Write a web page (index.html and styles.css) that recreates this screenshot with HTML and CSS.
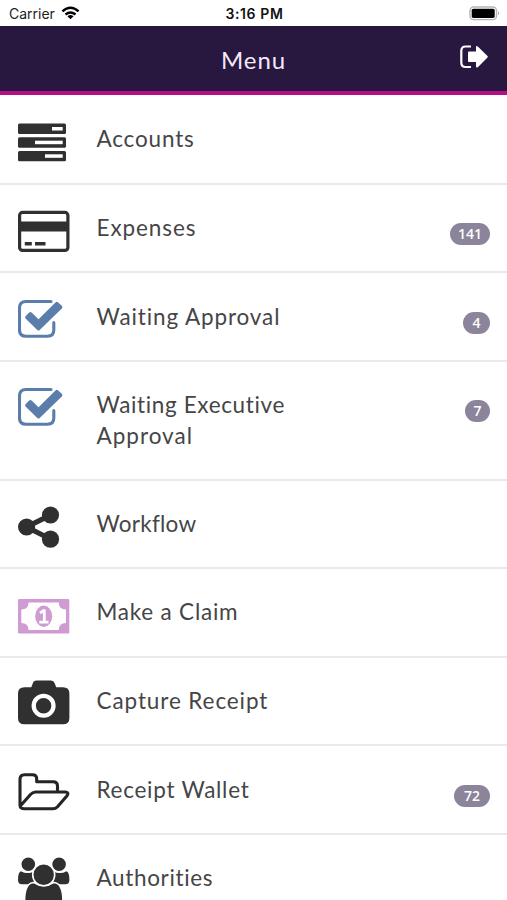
FILE: index.html
```html
<!DOCTYPE html>
<html lang="en">
<head>
<meta charset="utf-8">
<title>Menu</title>
<link rel="stylesheet" href="styles.css">
</head>
<body>
<div class="status">
  <div class="carrier"><span>Carrier</span>
    <svg class="wifi" viewBox="0 0 20 14"><g fill="none" stroke="#000" stroke-width="2.5"><path d="M1.5 5.2Q10-2.2 18.5 5.2"/><path d="M4.7 8.6Q10 4.2 15.3 8.6"/></g><path d="M6.8 10.4Q10 7.9 13.2 10.4L10 13.6z"/></svg>
  </div>
  <div class="clock">3:16 PM</div>
  <svg class="battery" viewBox="0 0 31 15"><rect x="1" y="1" width="26.5" height="12.6" rx="3.6" fill="#fff" stroke="#b5b5b5" stroke-width="1.4"/><rect x="2.7" y="2.7" width="23" height="9.2" rx="1.6"/><path d="M29 5Q31 7.3 29 9.600z" fill="#aaa"/></svg>
</div>
<header class="header">
  <h1>Menu</h1>
  <svg class="logout" viewBox="0 0 30 26"><path d="M12 2.500H6.500Q2.300 2.500 2.300 7V18.500Q2.300 23 6.500 23H12" fill="none" stroke="#fff" stroke-width="2.200"/><path d="M9 8.500Q9 7.500 10 7.500H17V3Q17.300 1.300 18.800 2.500L28.500 12Q29.200 12.700 28.500 13.500L18.800 23.200Q17.300 24.200 17 22.500V18H10Q9 18 9 17z" fill="#fff"/></svg>
</header>
<main class="menu">
  <div class="row">
    <svg class="icon" viewBox="0 0 52 60"><g fill="#303030"><rect y="7.600" width="48" height="10.400" rx="1.500"/><rect y="21.300" width="48" height="10.400" rx="1.500"/><rect y="34.900" width="48" height="10.400" rx="1.500"/></g><g fill="#fff"><rect x="34" y="11" width="10.700" height="3.500"/><rect x="17" y="24.700" width="27.700" height="3.500"/><rect x="27" y="38.300" width="17.700" height="3.500"/></g></svg>
    <span class="label accounts">Accounts</span>
  </div>
  <div class="row">
    <svg class="icon" viewBox="0 0 52 60"><rect x="1.600" y="8.400" width="48.300" height="38" rx="3" fill="#fff" stroke="#303030" stroke-width="3.200"/><path fill="#303030" d="M1 17.500H50V27.500H1zM6.800 38H13.800V41.500H6.800zM17 38H27.500V41.500H17z"/></svg>
    <span class="label expenses">Expenses</span><span class="badge b3">141</span>
  </div>
  <div class="row">
    <svg class="icon" viewBox="0 0 52 60"><path d="M33 8.500H8Q1.500 8.500 1.500 15V37Q1.500 43.200 8 43.200H29.500Q35.800 43.200 35.800 37V29.500" fill="none" stroke="#5b7dac" stroke-width="3.100" stroke-linecap="round"/><path d="M7.500 23.200L11.200 19.500Q12.500 18.500 13.800 19.700L20.500 26.200 37.500 9.400Q39 8.200 40.200 9.400L44 13.100Q45 14.400 43.800 15.600L21.700 37Q20.500 38 19.300 37L7.500 25.500Q6.600 24.300 7.500 23.200z" fill="#5b7dac"/></svg>
    <span class="label waiting">Waiting Approval</span><span class="badge b1">4</span>
  </div>
  <div class="row tall">
    <svg class="icon" viewBox="0 0 52 60"><path d="M33 8.500H8Q1.500 8.500 1.500 15V37Q1.500 43.200 8 43.200H29.500Q35.800 43.200 35.800 37V29.500" fill="none" stroke="#5b7dac" stroke-width="3.100" stroke-linecap="round"/><path d="M7.500 23.200L11.200 19.500Q12.500 18.500 13.800 19.700L20.500 26.200 37.500 9.400Q39 8.200 40.200 9.400L44 13.100Q45 14.400 43.800 15.600L21.700 37Q20.500 38 19.300 37L7.500 25.500Q6.600 24.300 7.500 23.200z" fill="#5b7dac"/></svg>
    <span class="label executive">Waiting Executive<br><span class="second">Approval</span></span><span class="badge b7">7</span>
  </div>
  <div class="row">
    <svg class="icon" viewBox="0 0 52 60"><path d="M32.500 15.200L8.500 27L32.500 39" fill="none" stroke="#303030" stroke-width="5.200"/><g fill="#303030"><circle cx="8.600" cy="27" r="8.600"/><circle cx="32.500" cy="15" r="8.600"/><circle cx="32.500" cy="39.200" r="8.600"/></g></svg>
    <span class="label workflow">Workflow</span>
  </div>
  <div class="row">
    <svg class="icon" viewBox="0 0 52 60"><rect y="10" width="51.300" height="34.400" rx="1.200" fill="#cf9bd2"/><path d="M10.500 13.500H40.800Q40.800 20.500 48 20.500V33.900Q40.800 33.900 40.800 41H10.500Q10.500 33.900 3.300 33.900V20.500Q10.500 20.500 10.500 13.500z" fill="#fff"/><ellipse cx="25.700" cy="27.200" rx="8.500" ry="10.700" fill="#cf9bd2"/><path d="M21.800 23.800Q25.500 22.500 26.300 20.500V33M21.300 33.200H30.500" fill="none" stroke="#fff" stroke-width="2.800"/></svg>
    <span class="label claim">Make a Claim</span>
  </div>
  <div class="row">
    <svg class="icon" viewBox="0 0 52 60"><path d="M6.500 10.300H13.300L14.800 6.300Q15.700 3.500 18.500 3.500H33Q35.800 3.500 36.700 6.300L38.200 10.300H45Q51.400 10.300 51.400 16.500V41Q51.400 47.300 45 47.300H6.500Q0 47.300 0 41V16.500Q0 10.300 6.500 10.300z" fill="#303030"/><circle cx="25.600" cy="28.800" r="9.900" fill="none" stroke="#fff" stroke-width="4.300"/></svg>
    <span class="label capture">Capture Receipt</span>
  </div>
  <div class="row">
    <svg class="icon" viewBox="0 0 52 60"><path d="M2 39.500V13.500Q2 8.800 6.500 8.800H14.500Q18.700 8.800 18.700 13V15.800H35Q39.500 15.800 39.500 20V26M2 39.500Q2.200 42.800 6.500 42.800H35Q37.500 42.800 39.500 40.700L48.800 30Q51.500 26.400 47.500 26H17.500Q14.500 26.200 12.500 28.500L2.300 40" fill="none" stroke="#252525" stroke-width="3.100" stroke-linejoin="round"/></svg>
    <span class="label wallet">Receipt Wallet</span><span class="badge b2">72</span>
  </div>
  <div class="row">
    <svg class="icon" viewBox="0 0 52 60"><g fill="#303030" stroke="#fff" stroke-width="1.600"><path d="M-.800 26Q-.800 16.500 3.500 16.500Q9 20 16 16.500L19 24 15 31H4Q-.800 31 -.800 26zM52.200 26Q52.200 16.500 47.900 16.500Q42.400 20 35.400 16.500L32.400 24 36.400 31H47.400Q52.200 31 52.200 26z"/><circle cx="10.300" cy="10.300" r="7.600"/><circle cx="41.100" cy="10.300" r="7.600"/><path d="M6.500 48Q6.500 28.500 16 28.500Q25.700 35 35.400 28.500Q45 28.500 45 48L42 54H10z"/><circle cx="25.700" cy="20.700" r="11"/></g></svg>
    <span class="label authorities">Authorities</span>
  </div>
</main>
</body>
</html>
```
FILE: styles.css
```css
* { box-sizing: border-box; }
html, body { height: 100%; }
body { margin: 0; height: 900px; overflow: hidden; background: #fff; font-family: Lato, sans-serif; color: #454547; }
.status { height: 25.5px; display: grid; grid-template-columns: 1fr auto 1fr; align-items: center; padding: 2px 7px 0 9px; font-family: Inter, "Liberation Sans", sans-serif; font-size: 14px; line-height: 22px; color: #222; }
.carrier { display: flex; align-items: center; gap: 6px; }
.wifi { width: 19px; height: 14px; margin-top: -2px; }
.clock { font-weight: 600; color: #111; letter-spacing: .6px; }
.battery { width: 31px; height: 15px; justify-self: end; }
.header { height: 69.5px; background: #28173f; border-bottom: 4px solid #b40d86; display: grid; grid-template-columns: 1fr auto 1fr; align-items: center; padding: 0 18px; }
.header h1 { grid-column: 2; margin: 4px 0 0; font-size: 24px; line-height: 30px; font-weight: 400; color: #f3eaf8; letter-spacing: .9px; }
.logout { width: 30px; height: 26px; justify-self: end; margin-top: -2px; }
.menu { padding-top: 1.2px; }
.row { display: flex; align-items: flex-start; height: 88.6px; padding: 0 17px 0 18px; border-bottom: 2px solid #e9e9e9; }
.row.tall { height: 118.6px; }
.icon { width: 52px; height: 60px; margin-top: 19.5px; flex: none; }
.label { margin: 28.3px 0 0 26.5px; font-size: 22.5px; line-height: 30.5px; white-space: nowrap; }
.accounts { letter-spacing: .82px; }
.expenses { letter-spacing: .92px; }
.waiting { letter-spacing: .88px; }
.executive { letter-spacing: .64px; }
.second { letter-spacing: 1px; }
.workflow { letter-spacing: .25px; }
.claim { letter-spacing: .78px; }
.capture { letter-spacing: .9px; }
.wallet { letter-spacing: .73px; }
.authorities { letter-spacing: .65px; }
.badge { margin: 38.3px 0 0 auto; height: 22px; border-radius: 11px; background: #8b849b; color: #fff; font: 600 14px/22px "Open Sans", sans-serif; text-align: center; }
.b3 { width: 40px; }
.b2 { width: 36px; }
.b1 { width: 27px; }
.b7 { width: 25px; }
```
